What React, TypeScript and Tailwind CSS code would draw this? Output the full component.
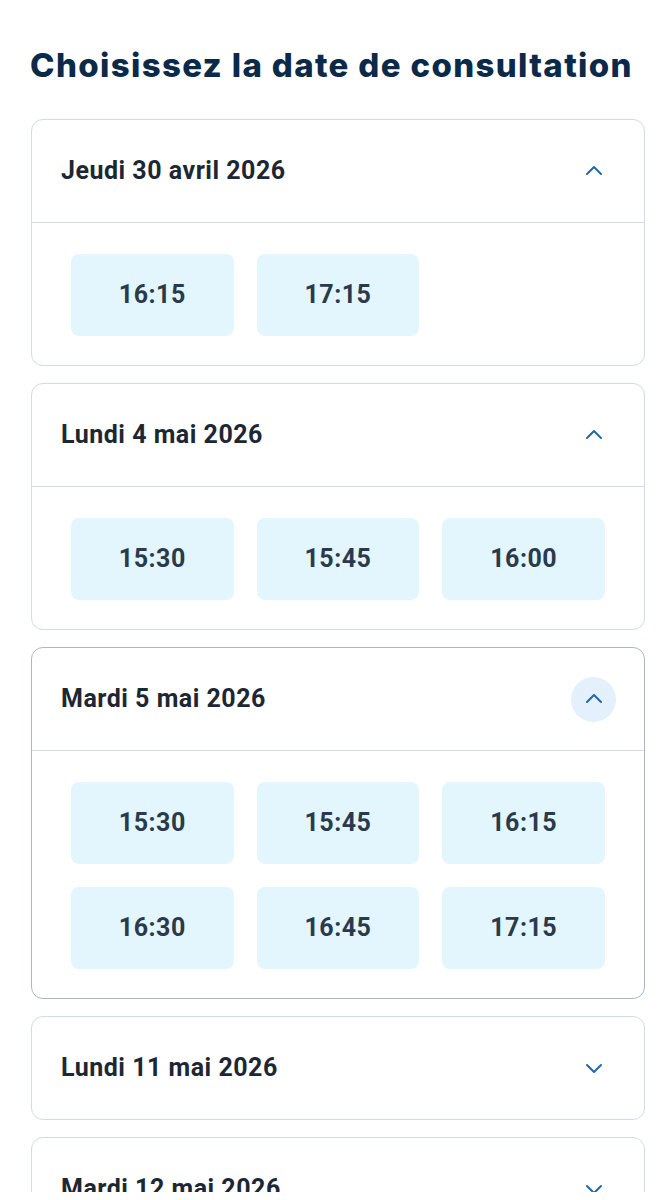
import React from "react";

type Day = {
  label: string;
  open: boolean;
  focused?: boolean;
  slots: string[];
};

const days: Day[] = [
  { label: "Jeudi 30 avril 2026", open: true, slots: ["16:15", "17:15"] },
  { label: "Lundi 4 mai 2026", open: true, slots: ["15:30", "15:45", "16:00"] },
  {
    label: "Mardi 5 mai 2026",
    open: true,
    focused: true,
    slots: ["15:30", "15:45", "16:15", "16:30", "16:45", "17:15"],
  },
  { label: "Lundi 11 mai 2026", open: false, slots: [] },
  { label: "Mardi 12 mai 2026", open: false, slots: [] },
];

const Chevron: React.FC<{ up: boolean }> = ({ up }) => (
  <svg width="24" height="24" viewBox="0 0 24 24" fill="none" stroke="#1f6aa8" strokeWidth="2" strokeLinecap="round" strokeLinejoin="round">
    {up ? <path d="M5 15l7-7 7 7" /> : <path d="M5 9l7 7 7-7" />}
  </svg>
);

const DayCard: React.FC<{ day: Day }> = ({ day }) => {
  return (
    <section
      className={`rounded-xl border bg-white ${day.focused ? "border-[#a9b8c7]" : "border-[#cfdbe6]"}`}
    >
      <div className="h-[102px] flex items-center justify-between pl-[29px] pr-[28px]">
        <h3 className="text-[25px] font-bold text-[#1d2733] font-['Roboto',sans-serif] tracking-[0.5px]">
          {day.label}
        </h3>
        <span
          className={`w-[45px] h-[45px] rounded-full flex items-center justify-center ${day.focused ? "bg-[#e4f0fb]" : ""}`}
        >
          <Chevron up={day.open} />
        </span>
      </div>
      {day.open && (
        <div className="border-t border-[#cfdbe6] pt-[31px] pb-[29px] px-[39px] grid grid-cols-3 gap-[23px]">
          {day.slots.map((s) => (
            <button
              key={s}
              className="h-[82px] rounded-lg bg-[#e3f6fd] text-[25px] font-bold text-[#2a3a4c] font-['Roboto',sans-serif] tracking-[0.5px]"
            >
              {s}
            </button>
          ))}
        </div>
      )}
    </section>
  );
};

export default function App() {
  return (
    <div className="h-[1200px] overflow-hidden bg-white relative">
      <div className="px-[31px] pt-[43px]">
        <h1 className="text-[33px] font-extrabold text-[#0b2a4a] font-['Inter',sans-serif] tracking-[1.35px] leading-[44px] mb-[32px] whitespace-nowrap -ml-[1px]">
          Choisissez la date de consultation
        </h1>
        <div className="flex flex-col gap-[17px] w-[614px]">
          {days.map((d) => (
            <DayCard key={d.label} day={d} />
          ))}
        </div>
      </div>
      <div className="absolute bottom-0 left-0 right-0 h-[8px] bg-white" />
    </div>
  );
}
